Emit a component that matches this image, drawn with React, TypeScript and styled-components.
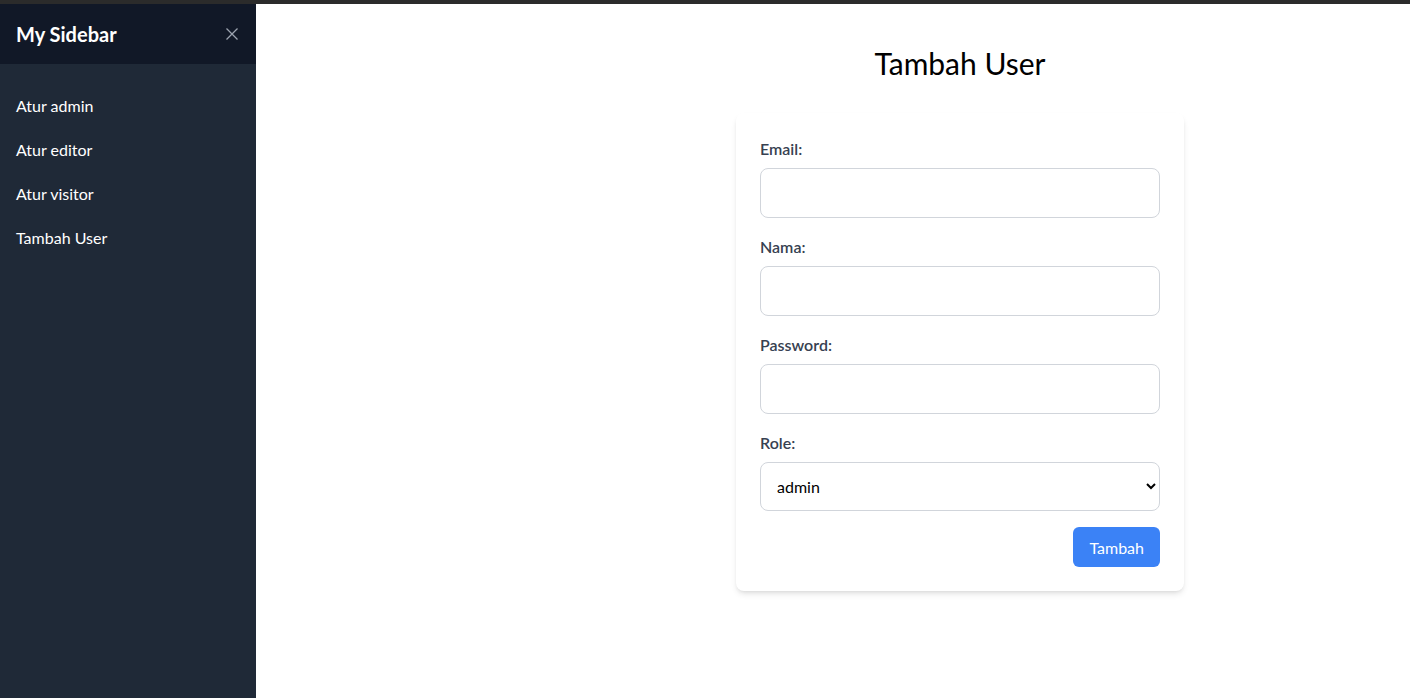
import React from 'react';
import styled, { createGlobalStyle } from 'styled-components';

const GlobalStyle = createGlobalStyle`
  html, body {
    margin: 0;
    padding: 0;
    height: 100%;
    overflow: hidden;
    background: #ffffff;
    font-family: Lato, 'Open Sans', sans-serif;
  }
  * {
    box-sizing: border-box;
  }
`;

const TopStrip = styled.div`
  height: 4px;
  background-color: #2b2b2b;
`;

const Layout = styled.div`
  display: flex;
  height: calc(100vh - 4px);
`;

const Sidebar = styled.aside`
  flex: 0 0 256px;
  background-color: #1f2937;
  color: #fff;
  display: flex;
  flex-direction: column;
`;

const SidebarHeader = styled.div`
  height: 60px;
  background-color: #111827;
  display: flex;
  align-items: center;
  justify-content: space-between;
  padding: 0 16px;
`;

const SidebarTitle = styled.h2`
  margin: 0;
  font-size: 20px;
  font-weight: 700;
  line-height: 28px;
`;

const CloseButton = styled.button`
  background: none;
  border: none;
  padding: 0;
  display: flex;
  color: #9ca3af;
  cursor: pointer;
`;

const Nav = styled.nav`
  display: flex;
  flex-direction: column;
  padding-top: 20px;
`;

const NavItem = styled.a`
  display: block;
  padding: 10px 16px;
  font-size: 16px;
  line-height: 24px;
  color: #fff;
  text-decoration: none;
  cursor: pointer;
  &:hover {
    background-color: #374151;
  }
`;

/* content is centred as if the main area started after the sidebar at full width */
const Main = styled.main`
  flex: 1;
  display: flex;
  flex-direction: column;
  align-items: center;
  padding: 41px 0 0 254px;
`;

const Title = styled.h1`
  margin: 0 0 32px;
  font-size: 30px;
  font-weight: 400;
  line-height: 36px;
  color: #000;
`;

const Card = styled.form`
  width: 448px;
  background: #fff;
  border-radius: 8px;
  padding: 24px;
  box-shadow: 0 4px 6px -1px rgba(0, 0, 0, 0.1), 0 2px 4px -2px rgba(0, 0, 0, 0.1);
  display: flex;
  flex-direction: column;
`;

const Field = styled.div<{ $gap?: number }>`
  display: flex;
  flex-direction: column;
  margin-bottom: ${props => props.$gap ?? 17}px;
`;

const Label = styled.label`
  font-size: 16px;
  font-weight: 600;
  line-height: 24px;
  color: #374151;
  margin-bottom: 7px;
`;

const Input = styled.input`
  height: 50px;
  padding: 12px 16px;
  border: 1px solid #d1d5db;
  border-radius: 8px;
  font-size: 16px;
  font-family: inherit;
  outline: none;
`;

const Select = styled.select`
  height: 49px;
  padding: 0 12px;
  border: 1px solid #d1d5db;
  border-radius: 8px;
  font-size: 16px;
  font-family: inherit;
  background: #fff;
  color: #000;
  outline: none;
`;

const Actions = styled.div`
  display: flex;
  justify-content: flex-end;
`;

const SubmitButton = styled.button`
  height: 40px;
  padding: 0 16px;
  border: none;
  border-radius: 6px;
  background-color: #3b82f6;
  color: #fff;
  font-size: 16px;
  font-family: inherit;
  cursor: pointer;
`;

const fields = [
  { label: 'Email:', type: 'email' },
  { label: 'Nama:', type: 'text' },
  { label: 'Password:', type: 'password' },
];

function App() {
  return (
    <>
      <GlobalStyle />
      <TopStrip />
      <Layout>
        <Sidebar>
          <SidebarHeader>
            <SidebarTitle>My Sidebar</SidebarTitle>
            <CloseButton aria-label="close">
              <svg width="16" height="16" viewBox="0 0 16 16" fill="none" stroke="currentColor" strokeWidth="1.3">
                <path d="M2.5 2.5l11 11M13.5 2.5l-11 11" />
              </svg>
            </CloseButton>
          </SidebarHeader>
          <Nav>
            <NavItem>Atur admin</NavItem>
            <NavItem>Atur editor</NavItem>
            <NavItem>Atur visitor</NavItem>
            <NavItem>Tambah User</NavItem>
          </Nav>
        </Sidebar>
        <Main>
          <Title>Tambah User</Title>
          <Card onSubmit={e => e.preventDefault()}>
            {fields.map(f => (
              <Field key={f.label}>
                <Label>{f.label}</Label>
                <Input type={f.type} />
              </Field>
            ))}
            <Field $gap={16}>
              <Label>Role:</Label>
              <Select defaultValue="admin">
                <option value="admin">admin</option>
                <option value="editor">editor</option>
                <option value="visitor">visitor</option>
              </Select>
            </Field>
            <Actions>
              <SubmitButton type="submit">Tambah</SubmitButton>
            </Actions>
          </Card>
        </Main>
      </Layout>
    </>
  );
}

export default App;
